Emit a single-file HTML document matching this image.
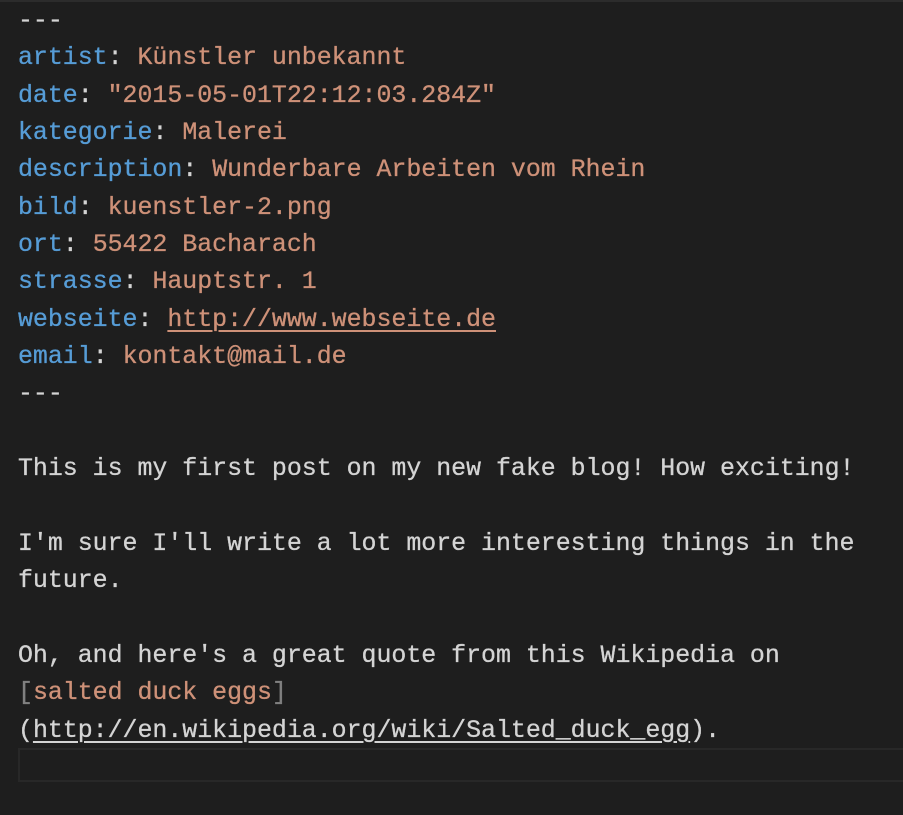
<!DOCTYPE html>
<html><head><meta charset="utf-8"><style>
html,body{margin:0;padding:0;background:#1e1e1e;width:903px;height:815px;overflow:hidden}
.top{position:absolute;left:0;top:0;width:903px;height:2px;background:#2c2c2c}
.ed{position:absolute;left:18px;top:3px;font-family:"Liberation Mono",monospace;font-size:24.9px;line-height:37.35px;color:#d4d4d4;white-space:pre;-webkit-text-stroke:0.3px currentColor}
.k{color:#569cd6}.v{color:#ce9178}.u{text-decoration:underline;text-decoration-thickness:2px;text-underline-offset:4px}
.g{color:#808080}
.cur{position:absolute;left:18px;top:748px;width:890px;height:34px;border:2px solid #282828;box-sizing:border-box}
</style></head><body>
<div class="top"></div>
<div class="cur"></div>
<div class="ed">---
<span class="k">artist</span>: <span class="v">Künstler unbekannt</span>
<span class="k">date</span>: <span class="v">"2015-05-01T22:12:03.284Z"</span>
<span class="k">kategorie</span>: <span class="v">Malerei</span>
<span class="k">description</span>: <span class="v">Wunderbare Arbeiten vom Rhein</span>
<span class="k">bild</span>: <span class="v">kuenstler-2.png</span>
<span class="k">ort</span>: <span class="v">55422 Bacharach</span>
<span class="k">strasse</span>: <span class="v">Hauptstr. 1</span>
<span class="k">webseite</span>: <span class="v u">http://www.webseite.de</span>
<span class="k">email</span>: <span class="v">kontakt@mail.de</span>
---

This is my first post on my new fake blog! How exciting!

I'm sure I'll write a lot more interesting things in the
future.

Oh, and here's a great quote from this Wikipedia on
<span class="g">[</span><span class="v">salted duck eggs</span><span class="g">]</span>
(<span class="u">http://en.wikipedia.org/wiki/Salted_duck_egg</span>).
</div>
</body></html>
